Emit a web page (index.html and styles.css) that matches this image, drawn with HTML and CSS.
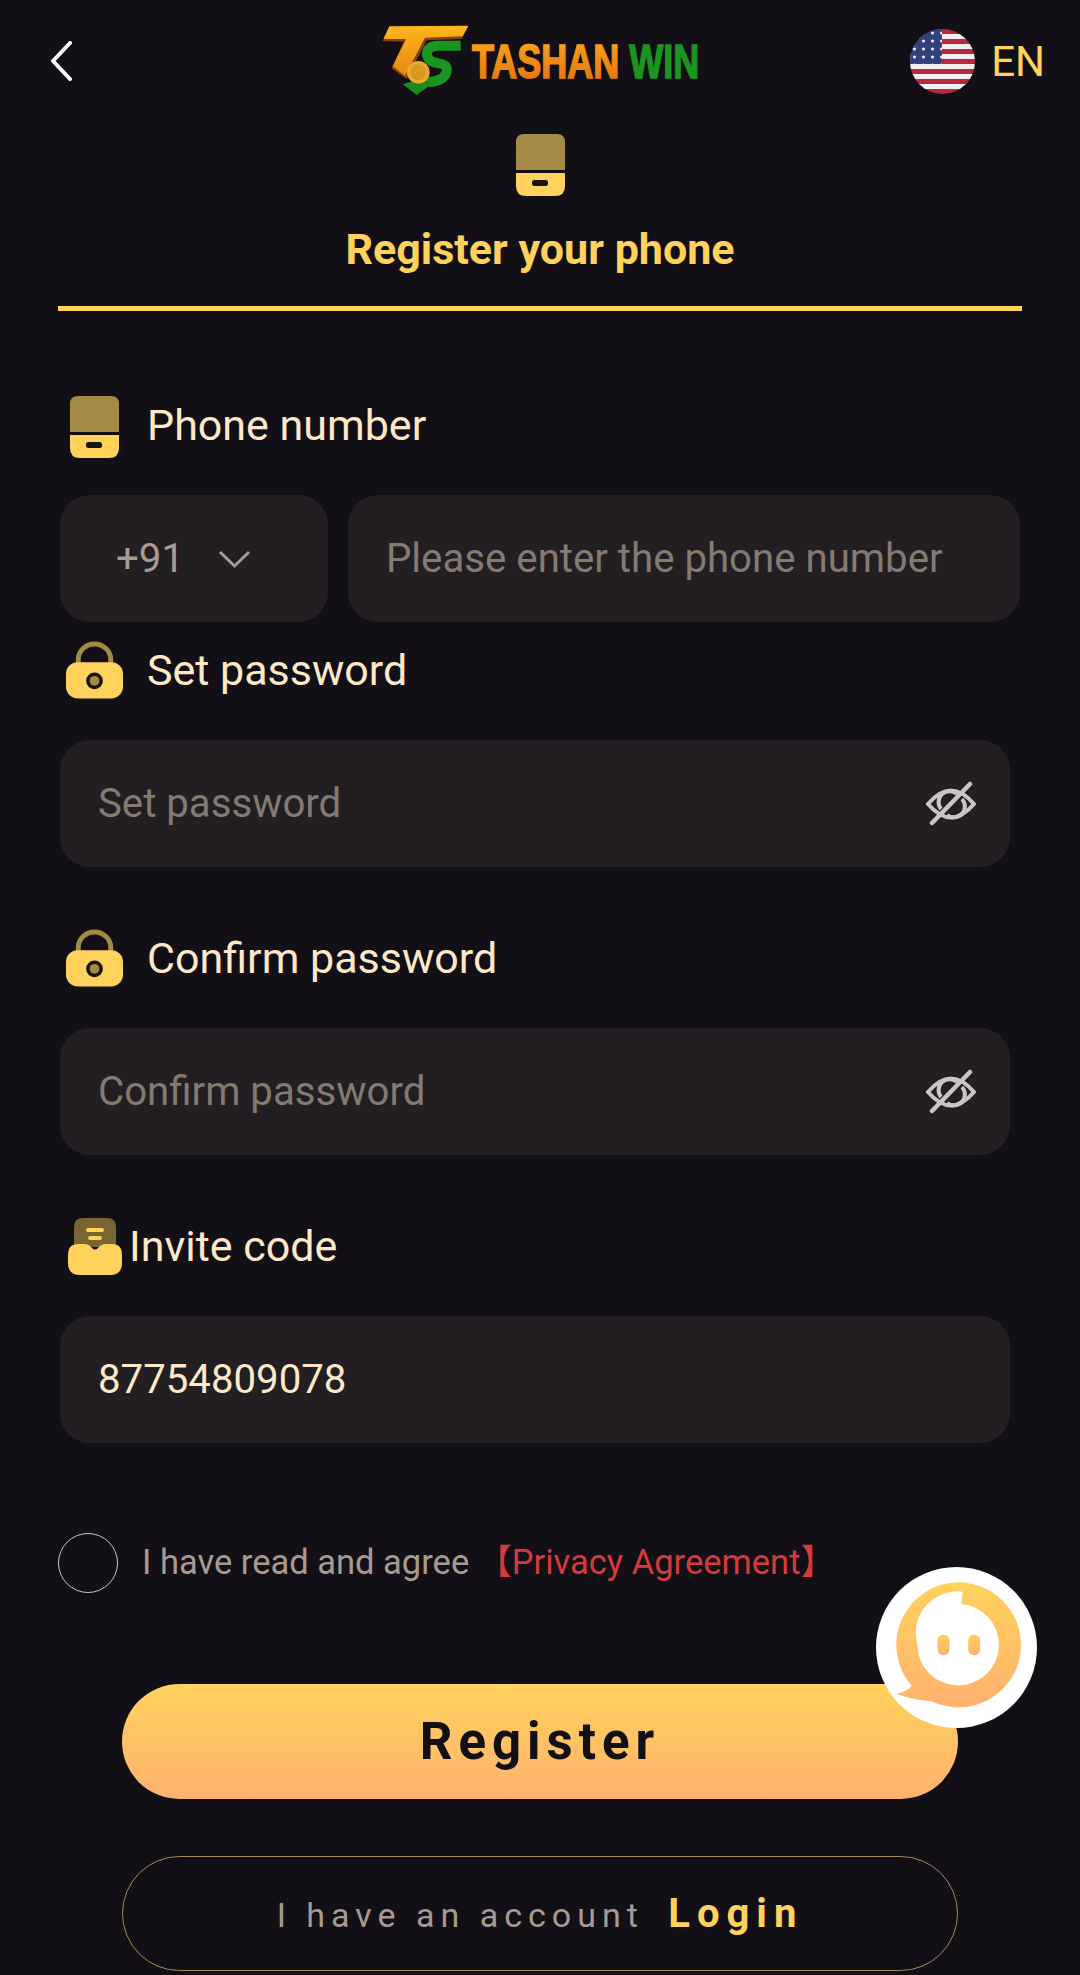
FILE: index.html
```html
<!DOCTYPE html>
<html lang="en">
<head>
    <meta charset="UTF-8">
    <meta name="viewport" content="width=device-width, initial-scale=1.0">
    <title>Register</title>
    <link rel="stylesheet" href="styles.css">
</head>
<body>
    <div class="page">

        <!-- top bar -->
        <header class="topbar">
            <svg class="back" width="22" height="40" viewBox="0 0 22 40">
                <path d="M20 2 L3 20 L20 38" fill="none" stroke="#fff" stroke-width="4" stroke-linecap="round" stroke-linejoin="round"/>
            </svg>
            <svg class="logo" width="320" height="76" viewBox="0 0 320 76">
                <defs>
                    <linearGradient id="orange" x1="0" y1="0" x2="0" y2="1">
                        <stop offset="0" stop-color="#fba81c"/>
                        <stop offset="1" stop-color="#e0700e"/>
                    </linearGradient>
                    <linearGradient id="tbar" x1="0" y1="0" x2="0" y2="1">
                        <stop offset="0" stop-color="#fcb81c"/>
                        <stop offset="1" stop-color="#ea8412"/>
                    </linearGradient>
                </defs>
                <g transform="translate(-20 -14) scale(.3333)">
                    <!-- T -->
                    <path d="M68 96 L92 60 L325 52 L305 90 L200 94 L140 210 L95 178 L132 98 Z" fill="#8f3d0e"/>
                    <path d="M88 52 L325 50 L308 82 L195 86 L135 200 L98 172 L138 90 L70 90 Z" fill="url(#tbar)"/>
                    <!-- S -->
                    <path d="M302 110 L232 110 Q196 112 202 142 Q208 160 240 164 Q268 168 258 194 Q248 216 205 220" fill="none" stroke="#1c9420" stroke-width="30"/>
                    <path d="M128 226 L170 258 L215 226 L200 205 Z" fill="#1c8a1f"/>
                    <circle cx="175" cy="190" r="34" fill="#e8ac2a"/>
                    <circle cx="175" cy="190" r="24" fill="#d99a24"/>
                </g>
                <text transform="translate(92 55) scale(.75 1)" class="logo-word"><tspan fill="url(#orange)" stroke="url(#orange)">TASHAN</tspan> <tspan fill="#1c9420" stroke="#1c9420">WIN</tspan></text>
            </svg>
            <div class="lang">
                <svg width="65" height="65" viewBox="0 0 65 65">
                    <defs>
                        <clipPath id="round"><circle cx="32.5" cy="32.5" r="32.5"/></clipPath>
                        <pattern id="stripes" width="65" height="10" patternUnits="userSpaceOnUse">
                            <rect width="65" height="10" fill="#f3eef0"/>
                            <rect width="65" height="5" fill="#b8283f"/>
                        </pattern>
                        <pattern id="stars" width="9" height="8" patternUnits="userSpaceOnUse">
                            <circle cx="4.5" cy="4" r="1.5" fill="#eef0f6"/>
                        </pattern>
                    </defs>
                    <g clip-path="url(#round)">
                        <rect width="65" height="65" fill="url(#stripes)"/>
                        <rect width="32" height="35" fill="#33407a"/>
                        <rect width="32" height="35" fill="url(#stars)"/>
                    </g>
                </svg>
                <span>EN</span>
            </div>
        </header>

        <!-- active tab -->
        <div class="tab">
            <svg class="phone-icon" width="49" height="62" viewBox="0 0 49 62">
                <path d="M0 36 V8 Q0 0 8 0 H41 Q49 0 49 8 V36 Z" fill="#a38b45"/>
                <path d="M0 39 H49 V52 Q49 62 39 62 H10 Q0 62 0 52 Z" fill="#ffd25c"/>
                <rect x="16" y="46" width="16" height="6" rx="2.5" fill="#17130f"/>
            </svg>
            <h2 class="tab-title">Register your phone</h2>
        </div>

        <form class="form">
            <div class="field field-first">
                <label class="field-label">
                    <span class="label-icon icon-low">
                        <svg width="49" height="62" viewBox="0 0 49 62">
                            <path d="M0 36 V8 Q0 0 8 0 H41 Q49 0 49 8 V36 Z" fill="#a38b45"/>
                            <path d="M0 39 H49 V52 Q49 62 39 62 H10 Q0 62 0 52 Z" fill="#ffd25c"/>
                            <rect x="16" y="46" width="16" height="6" rx="2.5" fill="#17130f"/>
                        </svg>
                    </span>
                    Phone number
                </label>
                <div class="phone-row">
                    <div class="box code-box">
                        <span>+91</span>
                        <svg width="33" height="20" viewBox="0 0 33 20">
                            <path d="M2 3 L16.5 17 L31 3" fill="none" stroke="#a89a92" stroke-width="3"/>
                        </svg>
                    </div>
                    <div class="box phone-box"><span class="placeholder">Please enter the phone number</span></div>
                </div>
            </div>

            <div class="field field-tight">
                <label class="field-label">
                    <span class="label-icon">
                        <svg width="58" height="58" viewBox="0 0 58 58">
                            <path d="M12.5 24 V18 A16.5 15.5 0 0 1 45.5 18 V24" fill="none" stroke="#a38b45" stroke-width="5"/>
                            <rect x="0" y="21" width="58" height="37" rx="12" fill="#ffd25c"/>
                            <circle cx="29" cy="40" r="8.5" fill="#17130f"/>
                            <circle cx="29" cy="40" r="5" fill="#a38b45"/>
                        </svg>
                    </span>
                    Set password
                </label>
                <div class="box password-box">
                    <span class="placeholder">Set password</span>
                    <svg class="eye" width="50" height="46" viewBox="0 0 50 46">
                        <path d="M2 23 Q25 -4 48 23 Q25 50 2 23 Z" fill="none" stroke="#c9c5c3" stroke-width="4"/>
                        <path d="M15 28 A11 11 0 0 1 31 13 M36 18 A11 11 0 0 1 21 34" fill="none" stroke="#c9c5c3" stroke-width="4"/>
                        <path d="M6 42 L44 3" stroke="#c9c5c3" stroke-width="4.5" stroke-linecap="round"/>
                    </svg>
                </div>
            </div>

            <div class="field">
                <label class="field-label">
                    <span class="label-icon">
                        <svg width="58" height="58" viewBox="0 0 58 58">
                            <path d="M12.5 24 V18 A16.5 15.5 0 0 1 45.5 18 V24" fill="none" stroke="#a38b45" stroke-width="5"/>
                            <rect x="0" y="21" width="58" height="37" rx="12" fill="#ffd25c"/>
                            <circle cx="29" cy="40" r="8.5" fill="#17130f"/>
                            <circle cx="29" cy="40" r="5" fill="#a38b45"/>
                        </svg>
                    </span>
                    Confirm password
                </label>
                <div class="box password-box">
                    <span class="placeholder">Confirm password</span>
                    <svg class="eye" width="50" height="46" viewBox="0 0 50 46">
                        <path d="M2 23 Q25 -4 48 23 Q25 50 2 23 Z" fill="none" stroke="#c9c5c3" stroke-width="4"/>
                        <path d="M15 28 A11 11 0 0 1 31 13 M36 18 A11 11 0 0 1 21 34" fill="none" stroke="#c9c5c3" stroke-width="4"/>
                        <path d="M6 42 L44 3" stroke="#c9c5c3" stroke-width="4.5" stroke-linecap="round"/>
                    </svg>
                </div>
            </div>

            <div class="field">
                <label class="field-label label-tight">
                    <span class="label-icon">
                        <svg width="54" height="58" viewBox="0 0 54 58">
                            <path d="M6 30 V10 Q6 1 15 1 H39 Q48 1 48 10 V30 Z" fill="#7a6431"/>
                            <rect x="18" y="11" width="18" height="4" rx="2" fill="#ffd25c"/>
                            <rect x="20" y="19" width="14" height="4" rx="2" fill="#ffd25c"/>
                            <path d="M0 38 Q0 27 10 27 H16 Q21 27 24 31 Q27 34 30 31 Q33 27 38 27 H44 Q54 27 54 38 V46 Q54 58 42 58 H12 Q0 58 0 46 Z" fill="#ffd25c"/>
                        </svg>
                    </span>
                    Invite code
                </label>
                <div class="box password-box">
                    <span class="value">87754809078</span>
                </div>
            </div>

            <div class="agree">
                <span class="radio"></span>
                <span class="agree-text">I have read and agree</span>
                <span class="agree-link">【Privacy Agreement】</span>
            </div>

            <button type="button" class="btn-register">Register</button>
            <button type="button" class="btn-login">I have an account <b>Login</b></button>
        </form>

        <!-- floating chat button -->
        <svg class="chat" width="161" height="161" viewBox="48 52 482 482">
            <defs>
                <linearGradient id="chatfill" x1="0" y1="0" x2="0" y2="1">
                    <stop offset="0" stop-color="#ffd25c"/>
                    <stop offset="1" stop-color="#ffb26f"/>
                </linearGradient>
            </defs>
            <circle cx="289" cy="293" r="241" fill="#fff"/>
            <path d="M295 98 A187 187 0 1 1 215 454 Q165 450 108 432 Q140 425 155 408 A187 187 0 0 1 295 98 Z" fill="url(#chatfill)"/>
            <path d="M308 126 L303 163 A122 122 0 1 1 172 285 A125 125 0 0 1 308 126 Z" fill="#fff"/>
            <rect x="232" y="254" width="36" height="62" rx="18" fill="url(#chatfill)"/>
            <rect x="324" y="254" width="36" height="62" rx="18" fill="url(#chatfill)"/>
        </svg>
    </div>
</body>
</html>
```

FILE: styles.css
```css
*{
    box-sizing: border-box;
}
body{
    margin: 0;
    background-color: #121016;
    font-family: Roboto, "Noto Sans CJK SC", sans-serif;
}
.page{
    position: relative;
    width: 1080px;
    height: 1975px;
    overflow: hidden;
    background-color: #121016;
}

/* top bar */
.topbar{
    display: grid;
    grid-template-columns: 1fr auto 1fr;
    align-items: center;
    height: 122px;
    padding: 0 35px;
}
.back{
    margin-left: 15px;
}
.logo{
    display: block;
    overflow: visible;
}
.logo-word{
    font-family: "Liberation Sans", sans-serif;
    font-size: 48px;
    font-weight: 700;
    stroke-width: 1.6px;
}
.lang{
    display: flex;
    align-items: center;
    justify-content: flex-end;
    gap: 16px;
    color: #ffd25c;
    font-size: 42px;
}

/* active tab */
.tab{
    display: flex;
    flex-direction: column;
    align-items: center;
    margin: 0 58px;
    padding: 12px 0 33px;
    border-bottom: 5px solid #ffd25c;
}
.tab-title{
    margin: 29px 0 0;
    color: #ffd25c;
    font-size: 43px;
    font-weight: 700;
    line-height: 48px;
}

/* form */
.form{
    padding-left: 60px;
}
.field{
    margin-top: 62px;
}
.field-first{
    margin-top: 85px;
}
.field-tight{
    margin-top: 19px;
}
.field-label{
    display: flex;
    align-items: center;
    gap: 24px;
    height: 60px;
    margin-bottom: 39px;
    padding: 0 0 2px 6px;
    color: #fde8c8;
    font-size: 43px;
}
.label-tight{
    gap: 6px;
}
.label-icon{
    display: flex;
    justify-content: center;
    width: 57px;
}
.icon-low{
    margin-top: 4px;
}
.box{
    display: flex;
    align-items: center;
    height: 127px;
    border-radius: 30px;
    background-color: #231e22;
    font-size: 40.2px;
}
.phone-row{
    display: flex;
    gap: 20px;
}
.code-box{
    gap: 34px;
    width: 268px;
    padding-left: 56px;
    color: #a89a92;
}
.phone-box{
    width: 672px;
    padding-left: 38px;
}
.password-box{
    justify-content: space-between;
    width: 950px;
    padding: 0 34px 0 38px;
}
.placeholder{
    color: #857a72;
}
.value{
    color: #fde8c8;
}

/* agreement row */
.agree{
    display: flex;
    align-items: center;
    height: 60px;
    margin: 90px 0 0 -2px;
    font-size: 34.5px;
    line-height: 40px;
}
.radio{
    width: 60px;
    height: 60px;
    margin-right: 24px;
    border: 1px solid #c9c5c3;
    border-radius: 50%;
}
.agree-text{
    margin-bottom: 2px;
    color: #a89a92;
}
.agree-link{
    margin: 0 0 2px 8px;
    color: #d63a3a;
}

/* buttons */
.btn-register,
.btn-login{
    display: block;
    width: 836px;
    height: 115px;
    margin-left: 62px;
    border-radius: 58px;
    font-family: inherit;
}
.btn-register{
    margin-top: 91px;
    border: 0;
    background: linear-gradient(180deg, #ffd25c, #ffb26f);
    color: #121016;
    font-size: 51px;
    font-weight: 700;
    letter-spacing: 6px;
}
.btn-login{
    margin-top: 57px;
    border: 1px solid #a38b5a;
    background: transparent;
    color: #a89a92;
    font-size: 34px;
    letter-spacing: 6px;
}
.btn-login b{
    margin-left: 10px;
    color: #ffd25c;
    font-size: 40px;
    letter-spacing: 7px;
}

/* floating chat button */
.chat{
    position: absolute;
    left: 876px;
    top: 1567px;
}
```
